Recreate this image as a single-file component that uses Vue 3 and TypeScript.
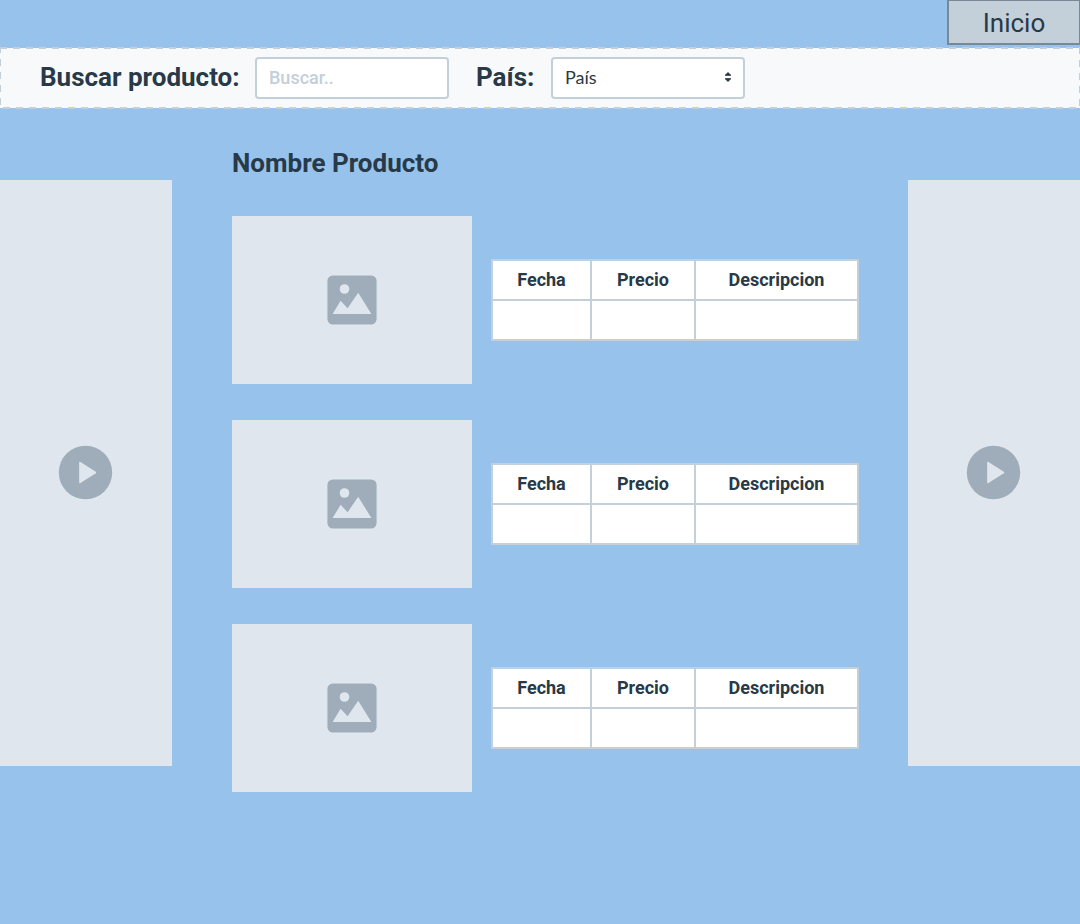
<script setup lang="ts">
import { ref } from 'vue'

interface Product {
  id: number
  fecha: string
  precio: string
  descripcion: string
}

const search = ref('')
const country = ref('')
const products: Product[] = [1, 2, 3].map((id) => ({ id, fecha: '', precio: '', descripcion: '' }))
</script>

<template>
  <div class="page">
    <header class="topbar">
      <button type="button" class="home">Inicio</button>
    </header>

    <form class="filters" @submit.prevent>
      <label class="filter-label" for="search">Buscar producto:</label>
      <input id="search" v-model="search" class="field" type="text" placeholder="Buscar.." />
      <label class="filter-label country-label" for="country">País:</label>
      <div class="select-wrap">
        <select id="country" v-model="country" class="field">
          <option value="">País</option>
        </select>
        <svg class="arrows" viewBox="0 0 8 12" aria-hidden="true">
          <path d="M1.2 4.3 L4 1.6 L6.8 4.3 Z M1.2 7.7 L4 10.4 L6.8 7.7 Z" />
        </svg>
      </div>
    </form>

    <div class="layout">
      <aside class="media">
        <svg class="play" viewBox="0 0 54 54" aria-hidden="true">
          <circle cx="26.5" cy="26.5" r="26.7" />
          <path class="cut" d="M20.2 16.6 Q20.2 15.2 21.5 16 L36.8 25.8 Q37.8 26.5 36.8 27.2 L21.5 37 Q20.2 37.8 20.2 36.4 Z" />
        </svg>
      </aside>

      <main class="content">
        <h1>Nombre Producto</h1>
        <section v-for="product in products" :key="product.id" class="product">
          <div class="photo">
            <svg class="picture" viewBox="0 0 50 50" aria-hidden="true">
              <rect x=".4" y=".4" width="49.2" height="49.2" rx="5.5" />
              <circle class="cut" cx="17.5" cy="14" r="4.8" />
              <path class="cut" d="M5.6 39 L13.6 25.8 L20.6 33.2 L31.2 17.8 L44.4 39 Z" />
            </svg>
          </div>
          <table>
            <colgroup>
              <col class="col-date" />
              <col class="col-price" />
              <col />
            </colgroup>
            <thead>
              <tr>
                <th scope="col">Fecha</th>
                <th scope="col">Precio</th>
                <th scope="col">Descripcion</th>
              </tr>
            </thead>
            <tbody>
              <tr>
                <td>{{ product.fecha }}</td>
                <td>{{ product.precio }}</td>
                <td>{{ product.descripcion }}</td>
              </tr>
            </tbody>
          </table>
        </section>
      </main>

      <aside class="media">
        <svg class="play" viewBox="0 0 54 54" aria-hidden="true">
          <circle cx="26.5" cy="26.5" r="26.7" />
          <path class="cut" d="M20.2 16.6 Q20.2 15.2 21.5 16 L36.8 25.8 Q37.8 26.5 36.8 27.2 L21.5 37 Q20.2 37.8 20.2 36.4 Z" />
        </svg>
      </aside>
    </div>
  </div>
</template>

<style>
body {
  margin: 0;
  background: #96c2eb;
}
</style>

<style scoped>
.page {
  --ink: #283947;
  --line: #c3cfd9;
  --panel: #dfe6ee;
  --icon: #9eadb9;
  min-height: 100vh;
  background: #96c2eb;
  color: var(--ink);
  font-family: Roboto, 'Liberation Sans', sans-serif;
}

.page *,
.page *::before {
  box-sizing: border-box;
}

.topbar {
  display: flex;
  justify-content: flex-end;
  align-items: flex-start;
  height: 48px;
}

.home {
  width: 133px;
  height: 45px;
  padding: 2px 0 0;
  border: solid #788896;
  border-width: 1px 1px 2px 2px;
  background: var(--line);
  color: var(--ink);
  font: 400 26px/32px Roboto, sans-serif;
}

.filters {
  position: relative;
  display: flex;
  align-items: center;
  height: 60px;
  padding: 0 40px;
  background: #f8f9fb;
}

.filters::before {
  content: '';
  position: absolute;
  inset: -1px 0;
  pointer-events: none;
  background:
    repeating-linear-gradient(90deg, var(--line) 0 7px, transparent 7px 13px) 0 0 / 100% 2px no-repeat,
    repeating-linear-gradient(90deg, transparent 0 3px, var(--line) 3px 10px, transparent 10px 13px) 0 100% / 100% 2px no-repeat,
    repeating-linear-gradient(180deg, var(--line) 0 6px, transparent 6px 12px, var(--line) 12px 13px) 0 0 / 1px 100% no-repeat,
    repeating-linear-gradient(180deg, var(--line) 0 7px, transparent 7px 13px) 100% 0 / 1px 100% no-repeat;
}

.filter-label {
  width: 215px;
  padding-bottom: 2px;
  font-size: 26px;
  font-weight: 700;
  line-height: 32px;
  white-space: nowrap;
}

.country-label {
  width: 75px;
  margin-left: 27px;
}

.field {
  display: block;
  width: 194px;
  height: 42px;
  padding: 0 12px 2px;
  border: 2px solid var(--line);
  border-radius: 4px;
  background: #fff;
  color: var(--ink);
  font: 400 18px/24px Lato, sans-serif;
  appearance: none;
}

input.field {
  font: 500 18px/24px Roboto, sans-serif;
}

.field::placeholder {
  color: var(--line);
  opacity: 1;
}

.select-wrap {
  position: relative;
}

.arrows {
  position: absolute;
  top: 14px;
  right: 13px;
  width: 8px;
  height: 12px;
  fill: var(--ink);
  stroke: var(--ink);
  stroke-linejoin: round;
  pointer-events: none;
}

.layout {
  display: grid;
  grid-template-columns: 172px 1fr 172px;
  align-items: start;
}

.media {
  display: flex;
  align-items: center;
  justify-content: center;
  height: 586px;
  margin-top: 72px;
  background: var(--panel);
}

.play {
  width: 54px;
  height: 54px;
  overflow: visible;
  fill: var(--icon);
}

.cut {
  fill: var(--panel);
}

.content {
  display: flex;
  flex-direction: column;
  gap: 36px;
  padding: 39px 48px 40px 60px;
}

h1 {
  margin: 0;
  font-size: 26px;
  font-weight: 700;
  line-height: 33px;
}

.product {
  display: flex;
  align-items: center;
  gap: 19px;
}

.photo {
  display: flex;
  flex: 0 0 240px;
  align-items: center;
  justify-content: center;
  height: 168px;
  background: var(--panel);
}

.picture {
  width: 50px;
  height: 50px;
  fill: var(--icon);
}

table {
  flex: 1;
  max-width: 368px;
  border-collapse: collapse;
  table-layout: fixed;
  background: #fff;
}

.col-date {
  width: 99px;
}

.col-price {
  width: 104px;
}

th,
td {
  height: 40px;
  padding: 0;
  border: 2px solid var(--line);
  font-size: 18px;
  line-height: 24px;
  text-align: center;
}
</style>
